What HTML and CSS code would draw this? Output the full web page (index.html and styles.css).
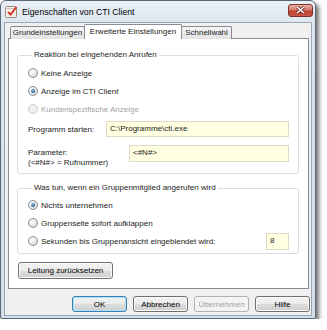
FILE: index.html
```html
<!DOCTYPE html>
<html lang="de">
<head>
    <meta charset="UTF-8">
    <title>Eigenschaften von CTI Client</title>
    <link rel="stylesheet" href="styles.css">
</head>
<body>

<div class="window">

    <!-- Titelleiste -->
    <div class="titlebar">
        <svg class="appicon" width="13" height="13" viewBox="0 0 13 13">
            <rect x="0.5" y="1.5" width="11" height="11" rx="1" fill="#f4efe6" stroke="#9a8f80"/>
            <rect x="2" y="3" width="8" height="1" fill="#c9bfae"/>
            <path d="M3 7 L5.5 9.5 L11.5 2" fill="none" stroke="#d0382b" stroke-width="2"/>
        </svg>
        <span class="title">Eigenschaften von CTI Client</span>
        <div class="close">
            <svg width="11" height="8" viewBox="0 0 11 8">
                <path d="M2 1 L9 7 M9 1 L2 7" stroke="#6b2a22" stroke-width="3"/>
                <path d="M2 1 L9 7 M9 1 L2 7" stroke="#ffffff" stroke-width="1.6"/>
            </svg>
        </div>
    </div>

    <div class="client">

        <div class="tabs">
            <div class="tab tab-first">Grundeinstellungen</div>
            <div class="tab tab-active">Erweiterte Einstellungen</div>
            <div class="tab tab-last">Schnellwahl</div>
        </div>

        <div class="panel">

            <fieldset class="group group-call">
                <legend>Reaktion bei eingehenden Anrufen</legend>
                <div class="option"><span class="radio"></span>Keine Anzeige</div>
                <div class="option"><span class="radio checked"></span>Anzeige im CTI Client</div>
                <div class="option disabled"><span class="radio"></span>Kundenspezifische Anzeige</div>

                <div class="field field-program">
                    <label class="field-label">Programm starten:</label>
                    <div class="input">C:\Programme\cti.exe</div>
                </div>
                <div class="field field-param">
                    <label class="field-label">Parameter:<br>(&lt;#N#&gt; = Rufnummer)</label>
                    <div class="input input-tall">&lt;#N#&gt;</div>
                </div>
            </fieldset>

            <fieldset class="group group-member">
                <legend>Was tun, wenn ein Gruppenmitglied angerufen wird</legend>
                <div class="option"><span class="radio checked"></span>Nichts unternehmen</div>
                <div class="option"><span class="radio"></span>Gruppenseite sofort aufklappen</div>
                <div class="option option-seconds">
                    <span class="radio"></span>Sekunden bis Gruppenansicht eingeblendet wird:
                    <div class="input input-small">8</div>
                </div>
            </fieldset>

            <button class="btn btn-reset">Leitung zurücksetzen</button>
        </div>

        <div class="buttons">
            <button class="btn btn-default">OK</button>
            <button class="btn">Abbrechen</button>
            <button class="btn" disabled>Übernehmen</button>
            <button class="btn">Hilfe</button>
        </div>

    </div>
</div>

</body>
</html>
```

FILE: styles.css
```css
body {
    margin: 0;
    background: #ffffff;
    font-family: "Liberation Sans", Arial, sans-serif;
    font-size: 8px;
    color: #1c1c1c;
}

/* Fensterrahmen */
.window {
    width: 314px;
    height: 317px;
    border: 1px solid #5b6877;
    border-radius: 6px 6px 2px 2px;
    background: linear-gradient(#e9f0f7, #d9e4ef 30px, #d3dfeb);
    box-shadow: 3px 3px 4px rgba(0, 0, 0, 0.55);
    display: flex;
    flex-direction: column;
}

.titlebar {
    height: 21px;
    flex: none;
    display: flex;
    align-items: center;
    padding: 0 2px 0 4px;
}

.appicon {
    margin-right: 4px;
}

.title {
    font-size: 8.7px;
    color: #000000;
    flex: 1;
}

.close {
    width: 23px;
    height: 11px;
    border: 1px solid #7a3128;
    border-radius: 3px;
    background: linear-gradient(#eab0a4, #d67c6c 45%, #c2402f 55%, #c8574a);
    display: flex;
    align-items: center;
    justify-content: center;
    margin-top: -3px;
}

.client {
    flex: 1;
    margin: 0 3px 2px;
    border: 1px solid #9aa8b6;
    background: #f0f0f0;
    padding: 1px 1px 0 3px;
}

/* Reiter */
.tabs {
    display: flex;
    align-items: flex-end;
    height: 15px;
    padding-left: 1px;
    margin-bottom: -1px;
}

.tab {
    height: 13px;
    line-height: 12px;
    border: 1px solid #898c95;
    border-bottom: none;
    border-radius: 2px 2px 0 0;
    background: linear-gradient(#f3f3f3, #e4e4e4);
    text-align: center;
    box-sizing: border-box;
}

.tab-first {
    width: 75px;
    margin-left: 1px;
}

.tab-active {
    width: 98px;
    height: 15px;
    line-height: 13px;
    background: #ffffff;
    position: relative;
    z-index: 1;
    margin-left: -1px;
}

.tab-last {
    width: 51px;
    margin-left: -1px;
}

.panel {
    border: 1px solid #898c95;
    background: #ffffff;
    padding: 11px 9px 9px 8px;
    margin-right: 1px;
}

/* Gruppen */
.group {
    margin: 0;
    padding: 4px 9px 5px 10px;
    border: 1px solid #d5dfe5;
    border-radius: 3px;
    min-width: 0;
}

.group legend {
    padding: 0 2px;
    margin-left: 4px;
    line-height: 10px;
}

.group-member {
    margin-top: 9px;
    padding-top: 3px;
    padding-bottom: 3px;
}

.option {
    height: 18px;
    display: flex;
    align-items: center;
}

.option.disabled {
    color: #a3a3a3;
}

.radio {
    width: 8px;
    height: 8px;
    border: 1px solid #8c8f94;
    border-radius: 50%;
    background: radial-gradient(circle at 35% 35%, #ffffff, #e2e2e2 60%, #c9cbce);
    margin-right: 3px;
    position: relative;
}

.radio.checked::after {
    content: "";
    position: absolute;
    left: 2px;
    top: 2px;
    width: 4px;
    height: 4px;
    border-radius: 50%;
    background: radial-gradient(circle at 35% 35%, #7fc0ee, #1d5e93 70%);
}

.disabled .radio {
    border-color: #c9cbce;
    background: #f1f1f1;
}

.field {
    display: flex;
    align-items: center;
}

.field-program {
    margin-top: 3px;
}

.field-label {
    width: 78px;
    flex: none;
}

.field-param {
    margin-top: 8px;
    align-items: flex-start;
    height: 23px;
}

.field-param .field-label {
    width: 101px;
    line-height: 10px;
    margin-top: 3px;
}

.input {
    flex: 1;
    height: 14px;
    line-height: 14px;
    border: 1px solid #dcdbc6;
    background: #ffffe1;
    padding-left: 3px;
}

.input-tall {
    height: 15px;
    line-height: 13px;
}

.input-small {
    flex: none;
    width: 18px;
    height: 15px;
    line-height: 13px;
    margin-left: auto;
}

/* Schaltflächen */
.btn {
    font-family: "Liberation Sans", Arial, sans-serif;
    font-size: 8px;
    color: #000000;
    height: 16px;
    width: 55px;
    padding: 0;
    border: 1px solid #707070;
    border-radius: 3px;
    background: linear-gradient(#f2f2f2, #ebebeb 50%, #dddddd 50%, #cfcfcf);
    box-shadow: inset 0 0 0 1px #fbfbfb;
}

.btn:disabled {
    color: #a0a0a0;
    border-color: #adb2b5;
    background: #f4f4f4;
    box-shadow: none;
}

.btn-default {
    border-color: #3c7fb1;
    box-shadow: inset 0 0 0 1px #a6e3f7;
}

.btn-reset {
    width: 95px;
    height: 17px;
    margin-top: 8px;
    margin-left: 1px;
}

.buttons {
    display: flex;
    justify-content: flex-end;
    gap: 6px;
    margin-top: 7px;
}
```
